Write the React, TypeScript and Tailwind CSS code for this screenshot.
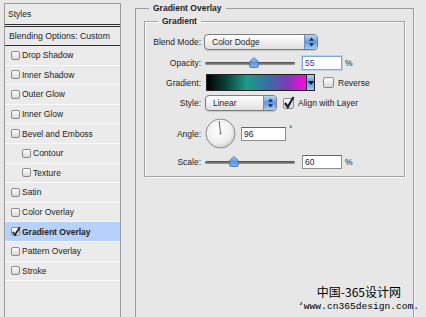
import React from "react";

const items: { label: string; indent?: boolean; checked?: boolean }[] = [
  { label: "Drop Shadow" },
  { label: "Inner Shadow" },
  { label: "Outer Glow" },
  { label: "Inner Glow" },
  { label: "Bevel and Emboss" },
  { label: "Contour", indent: true },
  { label: "Texture", indent: true },
  { label: "Satin" },
  { label: "Color Overlay" },
  { label: "Gradient Overlay", checked: true },
  { label: "Pattern Overlay" },
  { label: "Stroke" },
];

function Box({ checked, big }: { checked?: boolean; big?: boolean }) {
  return (
    <span
      className={`relative inline-block shrink-0 border border-[#8a8a8a] rounded-[2px] bg-linear-to-b from-white to-[#d8d8d8] ${
        big ? "w-[11px] h-[11px]" : "w-[9px] h-[9px]"
      }`}
    >
      {checked &&
        (big ? (
          <svg className="absolute -left-[1px] -top-[3px]" width="12" height="13" viewBox="0 0 12 13">
            <path d="M2 7 L4.8 11 L10.5 1" stroke="#1a2238" strokeWidth="2.2" fill="none" />
          </svg>
        ) : (
          <svg className="absolute -left-[1px] -top-[2px]" width="10" height="11" viewBox="0 0 10 11">
            <path d="M1.8 6 L4 9 L8.8 1.2" stroke="#1a2238" strokeWidth="1.8" fill="none" />
          </svg>
        ))}
    </span>
  );
}

function Select({ w, label }: { w: string; label: string }) {
  return (
    <div
      className={`flex h-[16px] ${w} rounded-[4px] border border-[#7c7c7c] bg-linear-to-b from-white to-[#e0e0e0] shadow-[0_1px_1px_rgba(0,0,0,0.15)]`}
    >
      <span className="flex-1 pl-[7px] leading-[14px] text-[#1e1e1e]">{label}</span>
      <span className="flex w-[13px] items-center justify-center rounded-r-[3px] border-l border-[#6f8fbf] bg-linear-to-b from-[#b8d3f5] via-[#5f98e2] to-[#a8cbf5]">
        <svg width="7" height="10" viewBox="0 0 7 10">
          <path d="M3.5 0.5 L6 3.8 H1Z M3.5 9.5 L6 6.2 H1Z" fill="#182a4c" />
        </svg>
      </span>
    </div>
  );
}

function Slider({ pos }: { pos: number }) {
  return (
    <div className="relative ml-[3px] h-[14px] w-[90px]">
      <div className="absolute left-0 right-0 top-[6px] h-[3px] rounded-full bg-linear-to-b from-[#4a4a4a] to-[#a0a0a0]" />
      <svg className="absolute top-[1px]" style={{ left: pos - 5 }} width="10" height="11" viewBox="0 0 10 11">
        <defs>
          <linearGradient id={`th${pos}`} x1="0" y1="0" x2="0" y2="1">
            <stop offset="0" stopColor="#b9d4f6" />
            <stop offset="0.5" stopColor="#5b93de" />
            <stop offset="1" stopColor="#8ab6ee" />
          </linearGradient>
        </defs>
        <path d="M5 0.5 L9.3 4.5 V9 Q9.3 10.5 7.8 10.5 H2.2 Q0.7 10.5 0.7 9 V4.5 Z" fill={`url(#th${pos})`} stroke="#3d6aa8" strokeWidth="0.8" />
      </svg>
    </div>
  );
}

function Field({ value, focused }: { value: string; focused?: boolean }) {
  return (
    <div
      className={`h-[14px] w-[40px] border bg-white pl-[2px] leading-[12px] ${
        focused
          ? "border-[#7fa6d8] text-[#234c8c] shadow-[0_0_0_1px_#bcd3f0]"
          : "border-[#8e8e8e] border-t-[#666] text-[#222]"
      }`}
    >
      {value}
    </div>
  );
}

function Label({ text }: { text: string }) {
  return <div className="w-[57px] shrink-0 pr-[1px] text-right text-[#222]">{text}</div>;
}

export default function App() {
  return (
    <div className="relative flex h-[317px] w-[426px] overflow-hidden bg-[#e7e7e7] font-['Liberation_Sans',Arial,sans-serif] text-[8.5px] leading-[10px]">
      {/* styles list */}
      <div className="ml-[4px] mt-[3px] h-[320px] w-[117px] shrink-0 border-x border-t border-[#9a9a9a] bg-[#ebebeb]">
        <div className="flex h-[23px] items-center border-b-[3px] border-double border-[#2e2e2e] pl-[3px] text-[#222]">
          Styles
        </div>
        <div className="flex h-[19px] items-center border-b border-[#2e2e2e] pl-[4px] text-[8.7px] text-[#222]">
          Blending Options: Custom
        </div>
        {items.map((it) => (
          <div
            key={it.label}
            className={`flex h-[19.6px] items-center gap-[2px] border-b border-[#f8f8f8] ${
              it.indent ? "pl-[17px]" : "pl-[6px]"
            } ${it.checked ? "bg-[#b6d2fb] font-bold" : ""}`}
          >
            <Box checked={it.checked} />
            <span className="text-[#222]">{it.label}</span>
          </div>
        ))}
      </div>

      {/* gradient overlay panel */}
      <fieldset className="ml-[14px] mt-[3px] h-[330px] w-[279px] shrink-0 border border-[#9c9c9c] px-[8px] shadow-[1px_0_0_#f6f6f6]">
        <legend className="ml-[5px] px-[4px] font-bold text-[#1e1e1e]">Gradient Overlay</legend>
        <fieldset className="mt-[3px] h-[161px] border border-[#a3a3a3] shadow-[inset_1px_1px_0_#f8f8f8,1px_1px_0_#f8f8f8]">
          <legend className="ml-[13px] px-[4px] font-bold text-[#1e1e1e]">Gradient</legend>

          <div className="mt-[8px] flex h-[16px] items-center">
            <Label text="Blend Mode:" />
            <div className="ml-[2px]">
              <Select w="w-[114px]" label="Color Dodge" />
            </div>
          </div>

          <div className="mt-[6px] flex h-[14px] items-center">
            <Label text="Opacity:" />
            <Slider pos={49} />
            <div className="ml-[7px]">
              <Field value="55" focused />
            </div>
            <span className="ml-[3px] text-[#222]">%</span>
          </div>

          <div className="mt-[4px] flex h-[17px] items-center">
            <Label text="Gradient:" />
            <div className="ml-[4px] flex h-[17px] border border-[#222]">
              <div className="h-full w-[99px] bg-[linear-gradient(to_right,#000_0%,#0c3b36_18%,#1c9a8a_40%,#3a6ea4_62%,#7a3cb4_80%,#e810d8_96%,#f010e0_100%)]" />
              <div className="flex w-[8px] items-center justify-center border-l border-[#222] bg-linear-to-b from-[#b2d0f4] via-[#5a93de] to-[#a4c8f3]">
                <svg width="6" height="4" viewBox="0 0 6 4">
                  <path d="M0 0 H6 L3 4Z" fill="#111" />
                </svg>
              </div>
            </div>
            <div className="ml-[8px] flex items-center gap-[4px]">
              <Box big />
              <span className="text-[#222]">Reverse</span>
            </div>
          </div>

          <div className="mt-[4px] flex h-[16px] items-center">
            <Label text="Style:" />
            <div className="ml-[3px]">
              <Select w="w-[72px]" label="Linear" />
            </div>
            <div className="ml-[6px] flex items-center gap-[4px]">
              <Box big checked />
              <span className="text-[#222]">Align with Layer</span>
            </div>
          </div>

          <div className="mt-[7px] flex h-[31px] items-center">
            <Label text="Angle:" />
            <svg className="ml-[3px] shrink-0" width="31" height="31" viewBox="0 0 31 31">
              <defs>
                <radialGradient id="dial" cx="0.45" cy="0.4" r="0.6">
                  <stop offset="0" stopColor="#ffffff" />
                  <stop offset="0.7" stopColor="#f0f0f0" />
                  <stop offset="1" stopColor="#cfcfcf" />
                </radialGradient>
              </defs>
              <circle cx="15.5" cy="15.5" r="14.5" fill="url(#dial)" stroke="#8a8a8a" />
              <line x1="15.5" y1="15.5" x2="14.2" y2="3" stroke="#555" strokeWidth="0.9" />
              <circle cx="15.5" cy="15.5" r="1" fill="#666" />
            </svg>
            <div className="ml-[5px] h-[14px] w-[45px] border border-[#8e8e8e] border-t-[#666] bg-white pl-[2px] leading-[12px] text-[#222]">
              96
            </div>
            <span className="ml-[3px] self-start pt-[6px] text-[#222]">°</span>
          </div>

          <div className="mt-[6px] flex h-[14px] items-center">
            <Label text="Scale:" />
            <Slider pos={29} />
            <div className="ml-[7px]">
              <Field value="60" />
            </div>
            <span className="ml-[3px] text-[#222]">%</span>
          </div>
        </fieldset>
      </fieldset>

      {/* watermark */}
      <div className="absolute right-[7px] top-[284px] flex flex-col items-end text-black">
        <span className="pr-[18px] font-['Noto_Sans_CJK_SC',sans-serif] text-[12px] leading-[15px]">中国-365设计网</span>
        <span className="mt-[2px] font-['Liberation_Mono',monospace] text-[9.6px] leading-[11px]">‘www.cn365design.com.</span>
      </div>
    </div>
  );
}
